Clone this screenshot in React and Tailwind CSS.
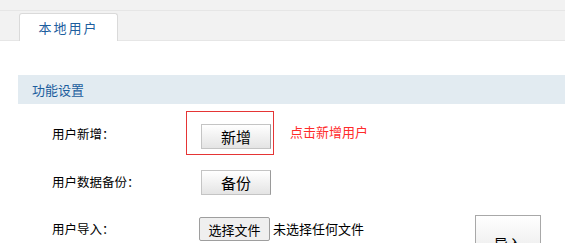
export default function App() {
  const font = { fontFamily: '"Noto Sans CJK SC", "Noto Sans", sans-serif' };
  const btn =
    "w-[70px] h-[25px] border border-[#c4c4c4] border-r-[#9a9a9a] bg-gradient-to-b from-white to-[#e4e4e4] text-[15px] text-black leading-none";

  return (
    <div className="w-[565px] h-[243px] overflow-hidden bg-white" style={font}>
      {/* top tab bar */}
      <div className="bg-[#f2f2f2]">
        <div className="h-[11px] border-b border-[#e6e6e6]" />
        <div className="h-[30px] flex items-end pl-[19px] border-b border-[#e6e6e6]">
          <div className="w-[99px] h-[28px] -mb-px bg-white border border-b-0 border-[#dadada] rounded-t-[3px] flex items-center justify-center text-[13px] text-[#1d5e9e] tracking-[2px]">
            本地用户
          </div>
        </div>
      </div>

      {/* section header */}
      <div className="mt-[34px] ml-[18px] h-[29px] bg-[#e2ebf1] flex items-center pl-[14px] text-[13px] text-[#1d5e9e]">
        功能设置
      </div>

      {/* rows */}
      <div className="mt-[7px] text-[12.5px] text-black">
        <div className="flex items-center h-[44px]">
          <div className="w-[186px] pl-[52px] pt-[2px]">用户新增：</div>
          <div className="w-[88px] h-[44px] border border-[#e53535] pl-[14px] pt-[12px]">
            <button className={btn}>新增</button>
          </div>
          <div className="ml-[16px] text-[#ff2b2b] text-[13px] pb-[3px]">点击新增用户</div>
        </div>

        <div className="flex items-center h-[25px] mt-[15px]">
          <div className="w-[201px] pl-[52px]">用户数据备份：</div>
          <button className={btn}>备份</button>
        </div>

        <div className="flex items-center h-[24px] mt-[22px]">
          <div className="w-[199px] pl-[52px]">用户导入：</div>
          <button className="w-[71px] h-[24px] border border-[#9e9e9e] bg-[#efefef] rounded-[2px] text-[13px] text-black leading-none">
            选择文件
          </button>
          <div className="ml-[3px] text-[13px]">未选择任何文件</div>
          <button className="ml-[111px] self-start -mt-[2px] w-[66px] h-[56px] shrink-0 border border-[#a8a8a8] bg-gradient-to-b from-white to-[#e4e4e4] text-[14px] text-black leading-none">
            导入
          </button>
        </div>
      </div>
    </div>
  );
}
